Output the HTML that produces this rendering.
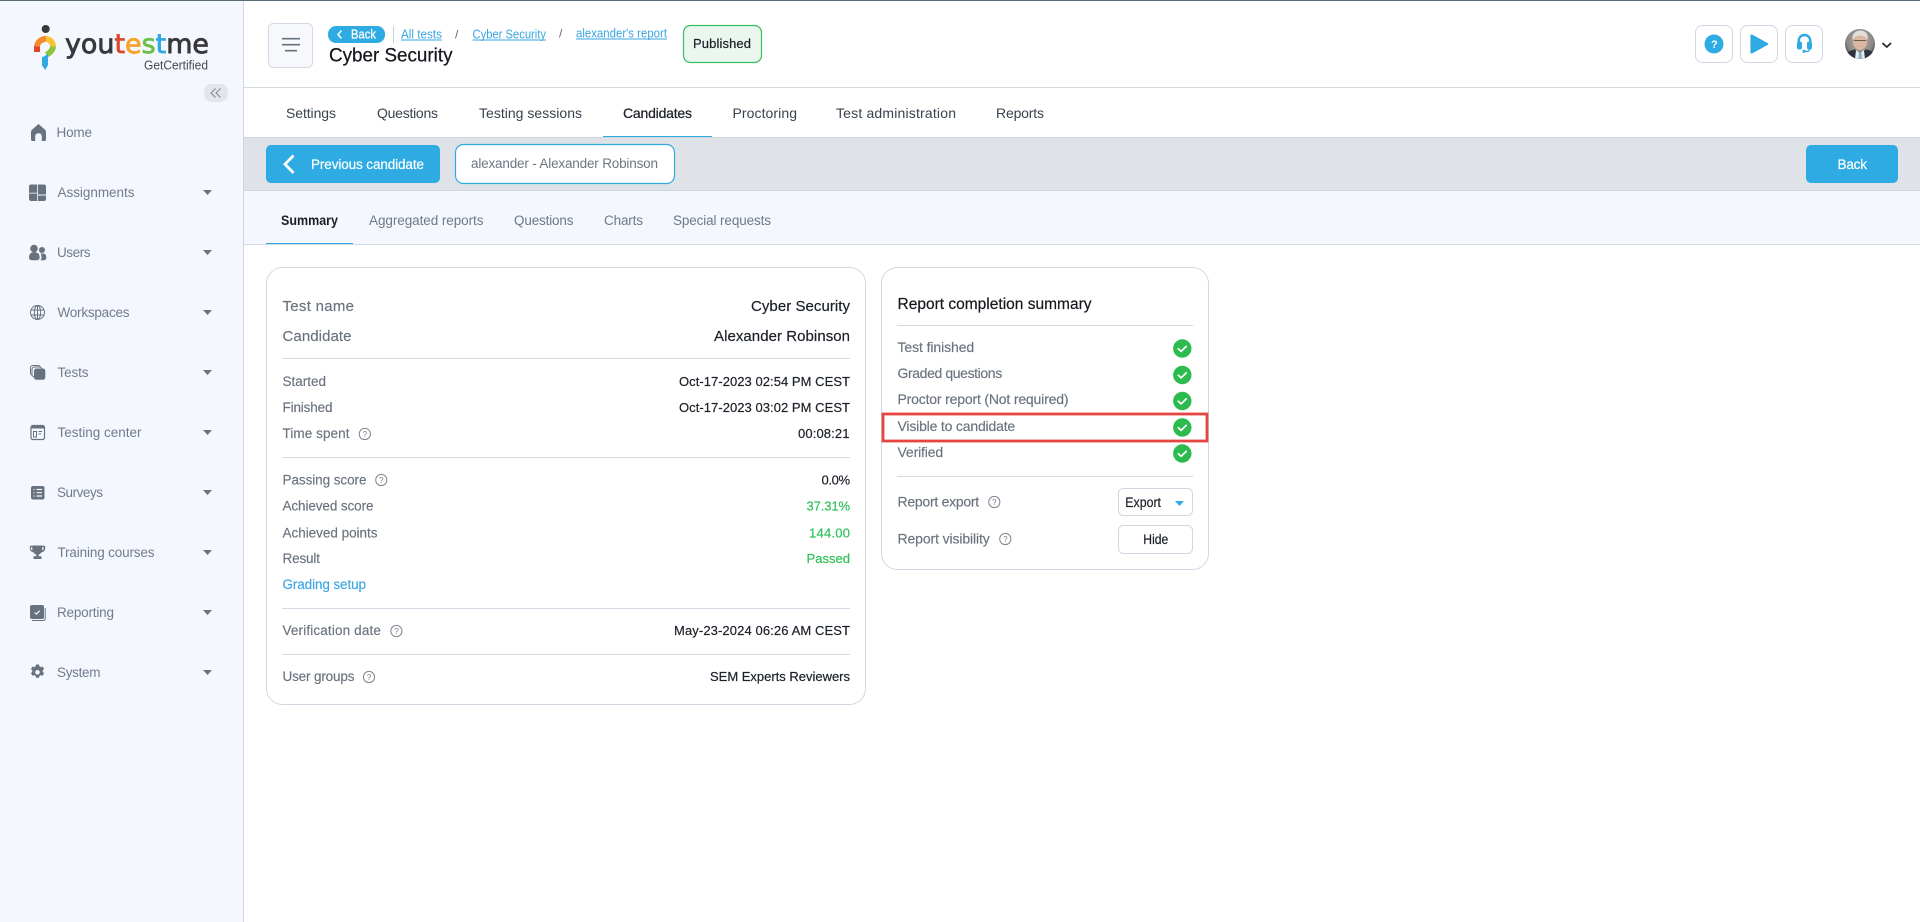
<!DOCTYPE html>
<html lang="en"><head><meta charset="utf-8"><title>Cyber Security - Candidate report</title>
<style>
html,body{margin:0;padding:0;background:#fff;width:1920px;height:922px;overflow:hidden}
svg{display:block;font-family:"Liberation Sans",sans-serif}
text{font-size:13px;fill:#6b7582}
.n{font-size:13.5px;fill:#717c8b}
.t{font-size:14px;fill:#39424e}
.s{font-size:13.5px;fill:#6f7986}
.l{font-size:13.5px;fill:#69727e;stroke:#69727e;stroke-width:.15}
.k{font-size:14px;fill:#69727e;stroke:#69727e;stroke-width:.15}
.h{font-size:15px;fill:#69727e;stroke:#69727e;stroke-width:.15}
.v{font-size:13px;fill:#1c2128;stroke:#1c2128;stroke-width:.2}
.V{font-size:15px;fill:#1c2128;stroke:#1c2128;stroke-width:.2}
.g{font-size:13px;fill:#30c25a;stroke:#30c25a;stroke-width:.2}
.a{font-size:12.5px;fill:#3aa6e2}
.q{font-size:8px;fill:#757d88}
</style></head><body>
<svg width="1920" height="922" viewBox="0 0 1920 922" xmlns="http://www.w3.org/2000/svg">
<defs>
<g id="cr"><path d="M0 0h9l-4.500 5z" fill="#68727e"/></g>
<g id="hp"><circle r="5.600" fill="none" stroke="#7d858f" stroke-width="1"/><text class="q" x="-2.200" y="2.900">?</text></g>
<g id="ck"><circle r="9.200" fill="#2cbb4f"/><path d="M-4 .3l2.800 2.600L3.900-2.100" fill="none" stroke="#fff" stroke-width="1.700" stroke-linecap="round" stroke-linejoin="round"/></g>
<clipPath id="av"><circle cx="1860" cy="44" r="15"/></clipPath>
<radialGradient id="avb" cx=".5" cy=".4" r=".62"><stop offset="0" stop-color="#b5b2ad"/><stop offset=".7" stop-color="#8b8884"/><stop offset="1" stop-color="#3f3f3f"/></radialGradient>
</defs>
<rect width="1920" height="922" fill="#fff"/>

<!-- Sidebar -->
<rect x="0" y="0" width="243" height="922" fill="#f4f7fe"/>
<rect x="243" y="0" width="1" height="922" fill="#ced6e1"/>

<!-- Logo -->
<circle cx="45.700" cy="29" r="4" fill="#38383a"/>
<path d="M37 52V46" fill="none" stroke="#e5432d" stroke-width="6"/>
<path d="M37 46.500A9 8.600 0 0 1 46 38.800" fill="none" stroke="#f5892b" stroke-width="5.800"/>
<path d="M46 38.800A7.800 7.800 0 0 1 53 46.400" fill="none" stroke="#fcc331" stroke-width="5.800"/>
<path d="M53 46.400Q53 51 46.500 54.800" fill="none" stroke="#8cc63f" stroke-width="5.800"/>
<path d="M42 57.500l6-3.500V65L45.300 70 42 65.500z" fill="#2fa9e0"/>
<text x="65" y="53" textLength="144" lengthAdjust="spacingAndGlyphs" style="font-family:'DejaVu Sans',sans-serif;font-size:27px;stroke-width:.8"><tspan fill="#38383a" stroke="#38383a">you</tspan><tspan fill="#d9482b" stroke="#d9482b">t</tspan><tspan fill="#f5a32b" stroke="#f5a32b">e</tspan><tspan fill="#6cc04a" stroke="#6cc04a">s</tspan><tspan fill="#2fa9e0" stroke="#2fa9e0">t</tspan><tspan fill="#38383a" stroke="#38383a">me</tspan></text>
<text x="144" y="69.500" textLength="64" lengthAdjust="spacingAndGlyphs" style="font-size:13px;fill:#4a4a4c">GetCertified</text>
<rect x="204" y="84" width="24" height="18" rx="8" fill="#e2e5ea"/>
<path d="M215.500 88.500L211 93l4.500 4.500M220.500 88.500L216 93l4.500 4.500" fill="none" stroke="#7d8590" stroke-width="1"/>

<!-- Sidebar icons -->
<path fill="#68727e" d="M38.500 124l6.300 5.500c.8.700 1.200 1.600 1.200 2.600V139.500c0 1-.7 1.500-1.500 1.500H41.800V136.500c0-1.900-1.400-3.200-3.300-3.200s-3.300 1.300-3.300 3.200V141H32.500c-.8 0-1.500-.5-1.500-1.500V132.100c0-1 .4-1.900 1.200-2.600z"/>
<path fill="#68727e" d="M31 184.500h6.200v8.200H29v-6.200c0-1.200.9-2 2-2zM38 184.500H44c1.200 0 2 .9 2 2V194.500h-8zM38 195.500H46V199c0 1.200-.9 2-2 2h-6zM29 193.500h8.200V201H31c-1.100 0-2-.9-2-2z"/>
<circle cx="34" cy="248.500" r="3.800" fill="#68727e"/><circle cx="42" cy="250" r="3" fill="#68727e"/>
<path fill="#68727e" d="M29 257c0-3 2.300-4.900 5-4.900h.6c2.700 0 5 1.900 5 4.900v.5c0 1.600-1.200 2.700-2.800 2.700h-5c-1.600 0-2.800-1.100-2.800-2.700zM40.500 253.500h2.500c1.900 0 3.300 1.400 3.300 3.400v.8c0 1.500-1.100 2.500-2.500 2.500h-3.300c.7-.8 1-1.800 1-2.800 0-1.400-.3-2.800-1-3.900z"/>
<g fill="none" stroke="#68727e" stroke-width="1"><circle cx="37.500" cy="312.500" r="7"/><ellipse cx="37.500" cy="312.500" rx="3.200" ry="7"/><path d="M31 310h13M31 315h13M37.500 305.500v14"/></g>
<rect x="30.500" y="365.500" width="10" height="10" rx="2.500" fill="none" stroke="#68727e" stroke-width="1"/>
<rect x="32" y="367" width="10" height="10" rx="2.500" fill="#f4f7fe" stroke="#68727e" stroke-width="1"/>
<rect x="34" y="368.500" width="11.300" height="11.300" rx="2.500" fill="#68727e"/>
<rect x="31" y="425.500" width="13.500" height="14" rx="2" fill="none" stroke="#68727e" stroke-width="1.200"/><rect x="31" y="425.500" width="13.500" height="3" fill="#68727e"/>
<path d="M33.500 431.500h3v5.500h-3zM38.500 431.500h3.500M38.500 434h2.500" fill="none" stroke="#68727e" stroke-width="1"/>
<rect x="31" y="486" width="13.500" height="13.500" rx="2" fill="#68727e"/>
<path d="M36.500 489.500h5.500M36.500 492.700h5.500M36.500 496h5.500M33.500 489.500h1M33.500 492.700h1M33.500 496h1" stroke="#f4f7fe" stroke-width="1.200"/>
<path fill="#68727e" d="M33 545.500h9c.3 0 .5 0 .5.3h1.700c.6 0 1 .4 1 1v1.600c0 2.200-1.600 3.600-3.700 3.900-.6 1.200-1.600 2-2.800 2.300v1.700h2.800v2.700h-8v-2.700h2.800v-1.700c-1.200-.3-2.200-1.100-2.800-2.300-2.100-.3-3.700-1.700-3.700-3.900v-1.600c0-.6.4-1 1-1h1.700c0-.3.2-.3.5-.3zm-2.200 1.800v1.100c0 .9.6 1.700 1.500 2v-3.100zm11.400 0v3.100c.9-.3 1.500-1.100 1.500-2v-1.100z"/>
<rect x="30" y="605" width="14" height="14" rx="2" fill="#68727e"/>
<path d="M45.200 608v10.500c0 1.300-.9 2-2 2H32" fill="none" stroke="#68727e" stroke-width="1"/>
<path d="M34.700 612.500l1.800 1.600 3.200-3.300" fill="none" stroke="#fff" stroke-width="1.100"/>
<path fill="#68727e" fill-rule="evenodd" d="M36 664.500h3l.4 1.800c.5.2 1 .5 1.400.8l1.800-.6 1.500 2.600-1.400 1.200c.1.500.1 1.100 0 1.600l1.400 1.200-1.500 2.600-1.800-.6c-.4.3-.9.6-1.400.8l-.4 1.800h-3l-.4-1.800c-.5-.2-1-.5-1.400-.8l-1.800.6-1.500-2.600 1.400-1.200c-.1-.5-.1-1.100 0-1.600l-1.400-1.200 1.500-2.600 1.800.6c.4-.3.9-.6 1.400-.8zm1.500 5.500a2.300 2.300 0 1 0 0 4.600 2.300 2.300 0 0 0 0-4.600z"/>

<!-- Sidebar text -->
<text class="n" x="56.500" y="137" textLength="35.500">Home</text>
<text class="n" x="57.500" y="197" textLength="77">Assignments</text>
<text class="n" x="57" y="257" textLength="33.500">Users</text>
<text class="n" x="57.500" y="317" textLength="72">Workspaces</text>
<text class="n" x="57.500" y="377" textLength="31">Tests</text>
<text class="n" x="57.500" y="437" textLength="84">Testing center</text>
<text class="n" x="57" y="497" textLength="46">Surveys</text>
<text class="n" x="57.500" y="557" textLength="97">Training courses</text>
<text class="n" x="57" y="617" textLength="57">Reporting</text>
<text class="n" x="57" y="677" textLength="43.500">System</text>
<use href="#cr" x="203" y="190"/><use href="#cr" x="203" y="250"/><use href="#cr" x="203" y="310"/><use href="#cr" x="203" y="370"/><use href="#cr" x="203" y="430"/><use href="#cr" x="203" y="490"/><use href="#cr" x="203" y="550"/><use href="#cr" x="203" y="610"/><use href="#cr" x="203" y="670"/>

<!-- Top line -->
<rect x="0" y="0" width="1920" height="1" fill="#5b6c78"/>

<!-- Header -->
<rect x="244" y="87" width="1676" height="1" fill="#d3d9e1"/>
<rect x="268.500" y="23.500" width="44" height="44" rx="5" fill="#f6f8fb" stroke="#d3d9e2"/>
<path d="M282 38.700h18M282 44.700h18M285 50.700h12" stroke="#68727e" stroke-width="1.600"/>
<rect x="328" y="26" width="57" height="17" rx="8" fill="#2eabe2"/>
<path d="M341.500 30.500L338 34.500l3.500 4" fill="none" stroke="#fff" stroke-width="1.500"/>
<text x="351" y="38.500" textLength="25" lengthAdjust="spacingAndGlyphs" style="font-size:12.500px;fill:#fff;stroke:#fff;stroke-width:.25">Back</text>
<rect x="393" y="26" width="1" height="17" fill="#c9d2dc"/>
<text class="a" x="401" y="38.500" textLength="41" lengthAdjust="spacingAndGlyphs">All tests</text><rect x="401" y="39.500" width="41" height="1" fill="#3aa6e2"/>
<text x="455" y="38.500" style="font-size:12px;fill:#5f6873">/</text>
<text class="a" x="472.500" y="38.500" textLength="73.500" lengthAdjust="spacingAndGlyphs">Cyber Security</text><rect x="472.500" y="39.500" width="73.500" height="1" fill="#3aa6e2"/>
<text x="559" y="37.500" style="font-size:12px;fill:#5f6873">/</text>
<text class="a" x="576" y="37.500" textLength="91" lengthAdjust="spacingAndGlyphs">alexander's report</text><rect x="576" y="38.500" width="91" height="1" fill="#3aa6e2"/>
<text x="329" y="61.500" textLength="123.500" lengthAdjust="spacingAndGlyphs" style="font-size:19.500px;fill:#14181d;stroke:#14181d;stroke-width:.25">Cyber Security</text>
<rect x="683.500" y="25.500" width="78" height="37" rx="7" fill="#eaf6ee" stroke="#33c25a" stroke-width="1.200"/>
<text x="693" y="48" textLength="58" style="font-size:13px;fill:#1a1f26;stroke:#1a1f26;stroke-width:.2">Published</text>

<rect x="1695.500" y="25.500" width="37" height="37" rx="7" fill="#fff" stroke="#ced8e2"/>
<rect x="1740.500" y="25.500" width="37" height="37" rx="7" fill="#fff" stroke="#ced8e2"/>
<rect x="1785.500" y="25.500" width="37" height="37" rx="7" fill="#fff" stroke="#ced8e2"/>
<circle cx="1714" cy="44" r="9.500" fill="#2eabe2"/>
<text x="1711" y="48" style="font-size:11px;font-weight:bold;fill:#fff">?</text>
<path d="M1751.500 35.500l15.500 8.500-15.500 8.500z" fill="#2eabe2" stroke="#2eabe2" stroke-width="2.200" stroke-linejoin="round"/>
<path d="M1798.700 44v-3.200a5.800 5.800 0 0 1 11.600 0V44" fill="none" stroke="#2eabe2" stroke-width="2.400"/>
<rect x="1797" y="41.500" width="5" height="8" rx="2" fill="#2eabe2"/>
<rect x="1807" y="41.500" width="5" height="8" rx="2" fill="#2eabe2"/>
<path d="M1809.500 49c0 1.800-1 2.400-2.500 2.400h-2.500" fill="none" stroke="#2eabe2" stroke-width="1.200"/>
<circle cx="1804" cy="51.300" r="1.600" fill="#2eabe2"/>

<g clip-path="url(#av)">
<rect x="1845" y="29" width="30" height="30" fill="url(#avb)"/>
<ellipse cx="1860" cy="41.500" rx="7" ry="8.500" fill="#dcb79f"/>
<path d="M1852.500 40c-.8-6 3-9.500 8-9.500s8.200 3.500 7 9.500c-1-3-4.500-4.500-7.500-4.500s-6 1.500-7.500 4.500z" fill="#e2dfda"/>
<path d="M1854 40.500h12" stroke="#6a5a50" stroke-width="1"/>
<path d="M1844 60c0-7 5-9.500 11-10.500l5 3 6-3c6 1 10 3.500 10 10.500z" fill="#2e343d"/>
<path d="M1856 50l4 3 4-3 1 9.500h-10z" fill="#e8ecf0"/>
<path d="M1859 52.500h2.400l.8 7.500h-4z" fill="#8ab1d0"/>
</g>
<path d="M1882.500 43l4.300 4 4.300-4" fill="none" stroke="#1e2126" stroke-width="1.600"/>

<!-- Tabs -->
<text class="t" x="286" y="118" textLength="50">Settings</text>
<text class="t" x="377" y="118" textLength="61">Questions</text>
<text class="t" x="479" y="118" textLength="103">Testing sessions</text>
<text class="t" x="623" y="118" textLength="69" style="fill:#1c2128;stroke:#1c2128;stroke-width:.25">Candidates</text>
<text class="t" x="732.500" y="118" textLength="64.500">Proctoring</text>
<text class="t" x="836" y="118" textLength="120">Test administration</text>
<text class="t" x="996" y="118" textLength="48">Reports</text>
<rect x="603" y="136" width="109" height="1" fill="#2eabe2"/>

<!-- Candidate bar -->
<rect x="244" y="137" width="1676" height="54" fill="#dfe2e7"/>
<rect x="244" y="137" width="1676" height="1" fill="#cfd6de"/>
<rect x="244" y="190" width="1676" height="1" fill="#cfd6de"/>
<rect x="266" y="145" width="174" height="38" rx="5" fill="#2eabe2"/>
<path d="M293.500 155.500L285 164.200l8.500 8.700" fill="none" stroke="#fff" stroke-width="2.800"/>
<text x="311" y="169" textLength="113" style="font-size:13.500px;fill:#fff;stroke:#fff;stroke-width:.2">Previous candidate</text>
<rect x="455.500" y="144.500" width="219" height="39" rx="8" fill="#fff" stroke="#2eabe2" stroke-width="1.200"/>
<text x="471" y="168" textLength="187" style="font-size:13.500px;fill:#6e7681">alexander - Alexander Robinson</text>
<rect x="1806" y="145" width="92" height="38" rx="5" fill="#2eabe2"/>
<text x="1837.500" y="169" textLength="29.500" style="font-size:13.500px;fill:#fff;stroke:#fff;stroke-width:.2">Back</text>

<!-- Sub tabs -->
<rect x="244" y="191" width="1676" height="53" fill="#f4f7fe"/>
<rect x="244" y="244" width="1676" height="1" fill="#d3dae3"/>
<rect x="266" y="243" width="87" height="1" fill="#2eabe2"/>
<text x="281" y="225" textLength="57" lengthAdjust="spacingAndGlyphs" style="font-size:13.500px;font-weight:bold;fill:#1a1f26">Summary</text>
<text class="s" x="369" y="225" textLength="114.500">Aggregated reports</text>
<text class="s" x="514" y="225" textLength="59.500">Questions</text>
<text class="s" x="604" y="225" textLength="39">Charts</text>
<text class="s" x="673" y="225" textLength="98">Special requests</text>

<!-- Card 1 -->
<rect x="266.500" y="267.500" width="599" height="437" rx="16" fill="#fff" stroke="#cfd8e2"/>
<text class="h" x="282.500" y="311" textLength="71.500">Test name</text>
<text class="V" x="751" y="311" textLength="99">Cyber Security</text>
<text class="h" x="282.500" y="341" textLength="69">Candidate</text>
<text class="V" x="714" y="341" textLength="136">Alexander Robinson</text>
<rect x="282" y="358" width="568" height="1" fill="#d3dae3"/>
<text class="l" x="282.500" y="386" textLength="43.500">Started</text>
<text class="v" x="679" y="386" textLength="171">Oct-17-2023 02:54 PM CEST</text>
<text class="l" x="282.500" y="412" textLength="50">Finished</text>
<text class="v" x="679" y="412" textLength="171">Oct-17-2023 03:02 PM CEST</text>
<text class="l" x="282.500" y="438" textLength="67">Time spent</text>
<use href="#hp" x="364.800" y="434"/>
<text class="v" x="798" y="438" textLength="51.500">00:08:21</text>
<rect x="282" y="457" width="568" height="1" fill="#d3dae3"/>
<text class="l" x="282.500" y="484.700" textLength="84">Passing score</text>
<use href="#hp" x="381.300" y="480"/>
<text class="v" x="821.500" y="484.700" textLength="28.500">0.0%</text>
<text class="l" x="282.500" y="510.300" textLength="91">Achieved score</text>
<text class="g" x="806.500" y="510.300" textLength="43.500">37.31%</text>
<text class="l" x="282.500" y="537.300" textLength="95">Achieved points</text>
<text class="g" x="809" y="537.300" textLength="41">144.00</text>
<text class="l" x="282.500" y="563" textLength="37.500">Result</text>
<text class="g" x="806.500" y="563" textLength="43.500">Passed</text>
<text x="282.500" y="589" textLength="83.500" style="font-size:13.500px;fill:#3aa6e2;stroke:#3aa6e2;stroke-width:.15">Grading setup</text>
<rect x="282" y="608" width="568" height="1" fill="#d3dae3"/>
<text class="l" x="282.500" y="635" textLength="98.400">Verification date</text>
<use href="#hp" x="396.400" y="631"/>
<text class="v" x="674" y="635" textLength="176">May-23-2024 06:26 AM CEST</text>
<rect x="282" y="654" width="568" height="1" fill="#d3dae3"/>
<text class="l" x="282.500" y="681" textLength="72">User groups</text>
<use href="#hp" x="369" y="677"/>
<text class="v" x="710" y="681" textLength="140">SEM Experts Reviewers</text>

<!-- Card 2 -->
<rect x="881.500" y="267.500" width="327" height="302" rx="16" fill="#fff" stroke="#cfd8e2"/>
<text x="897.500" y="309" textLength="194" style="font-size:15.500px;fill:#14181d;stroke:#14181d;stroke-width:.2">Report completion summary</text>
<rect x="897" y="325" width="296" height="1" fill="#d3dae3"/>
<text class="k" x="897.500" y="352" textLength="76.700">Test finished</text>
<text class="k" x="897.500" y="378" textLength="104.700">Graded questions</text>
<text class="k" x="897.500" y="404" textLength="171">Proctor report (Not required)</text>
<text class="k" x="897.500" y="431" textLength="117.700">Visible to candidate</text>
<text class="k" x="897.500" y="457" textLength="45.700">Verified</text>
<use href="#ck" x="1182.300" y="348.500"/>
<use href="#ck" x="1182.300" y="375"/>
<use href="#ck" x="1182.300" y="401"/>
<use href="#ck" x="1182.300" y="427.500"/>
<use href="#ck" x="1182.300" y="453.500"/>
<rect x="883" y="414" width="324" height="27" fill="none" stroke="#e6463f" stroke-width="2.800"/>
<rect x="897" y="476" width="296" height="1" fill="#d3dae3"/>
<text class="k" x="897.500" y="506.500" textLength="81.700">Report export</text>
<use href="#hp" x="994.300" y="502"/>
<rect x="1118.500" y="488.500" width="74" height="27" rx="5" fill="#fff" stroke="#cfd8e2"/>
<text class="v" x="1125.300" y="507" textLength="35.700" lengthAdjust="spacingAndGlyphs" style="font-size:13.500px">Export</text>
<path d="M1175 501h9l-4.500 5z" fill="#2eabe2"/>
<text class="k" x="897.500" y="543.500" textLength="92.300">Report visibility</text>
<use href="#hp" x="1005.300" y="539"/>
<rect x="1118.500" y="525.500" width="74" height="28" rx="5" fill="#fff" stroke="#cfd8e2"/>
<text class="v" x="1143.300" y="544" textLength="25" lengthAdjust="spacingAndGlyphs" style="font-size:13.500px">Hide</text>
</svg>
</body></html>
